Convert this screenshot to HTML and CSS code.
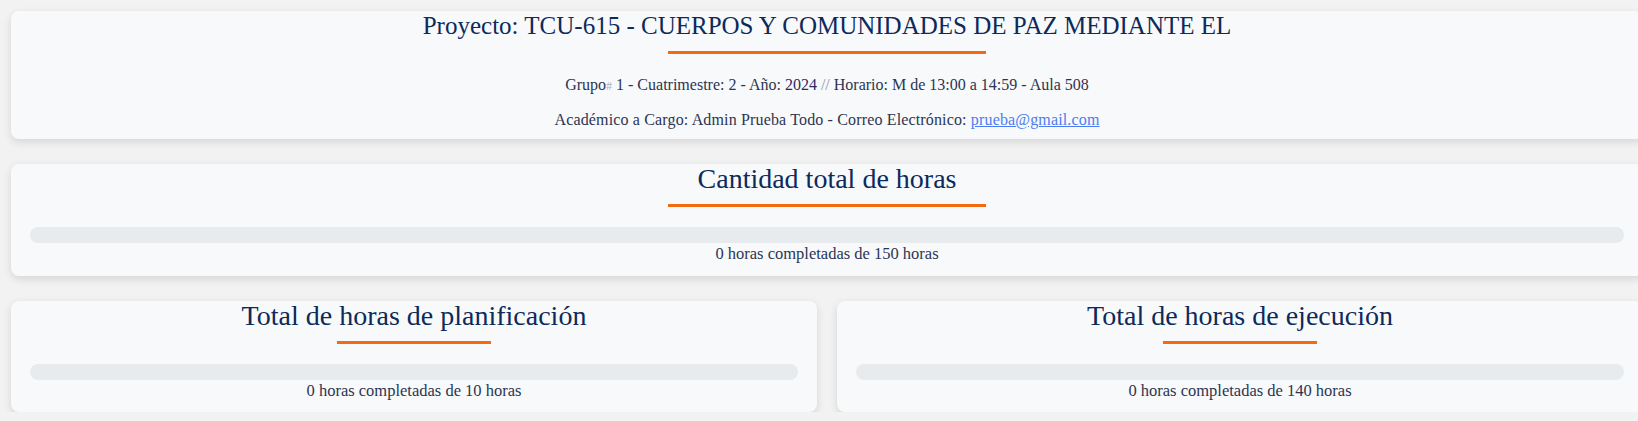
FILE: index.html
```html
<!DOCTYPE html>
<html lang="es">
<head>
<meta charset="utf-8">
<title>Proyecto TCU-615</title>
<link rel="stylesheet" href="styles.css">
</head>
<body>
<div class="page">
  <section class="card card-project">
    <h2 class="card-title card-title-caps">Proyecto: TCU-615 - CUERPOS Y COMUNIDADES DE PAZ MEDIANTE EL</h2>
    <div class="rule"></div>
    <div class="info-list">
      <p class="info">Grupo<span class="hash">#</span> 1 - Cuatrimestre: 2 - Año: <span class="year">2024</span> <span class="sep">//</span> Horario: M de 13:00 a 14:59 - Aula 508</p>
      <p class="info info-wide">Académico a Cargo: Admin Prueba Todo - Correo Electrónico: <a class="mail" href="#">prueba@gmail.com</a></p>
    </div>
  </section>

  <section class="card">
    <h2 class="card-title">Cantidad total de horas</h2>
    <div class="rule"></div>
    <div class="bar"><div class="bar-fill" style="width:0%"></div></div>
    <p class="progress-text">0 horas completadas de 150 horas</p>
  </section>

  <div class="row">
    <section class="card card-half">
      <h2 class="card-title">Total de horas de planificación</h2>
      <div class="rule"></div>
      <div class="bar"><div class="bar-fill" style="width:0%"></div></div>
      <p class="progress-text">0 horas completadas de 10 horas</p>
    </section>
    <section class="card card-half">
      <h2 class="card-title">Total de horas de ejecución</h2>
      <div class="rule"></div>
      <div class="bar"><div class="bar-fill" style="width:0%"></div></div>
      <p class="progress-text">0 horas completadas de 140 horas</p>
    </section>
  </div>
</div>
</body>
</html>
```

FILE: styles.css
```css
html, body {
  margin: 0;
  padding: 0;
  overflow: hidden;
  background: #f2f2f2;
}

body {
  font-family: "Liberation Serif", "DejaVu Serif", serif;
  color: #2b3553;
}

.page {
  width: 1632px;
  padding: 11px 0 0 11px;
  display: flex;
  flex-direction: column;
  gap: 25px;
}

.card {
  background: #f8f9fa;
  border-radius: 8px;
  box-shadow: 0 3px 8px rgba(0, 0, 0, 0.12);
  padding: 0 19px 12px;
  text-align: center;
}

.card-project {
  padding-bottom: 0;
}

.card-half {
  padding-bottom: 11px;
}

.card-title {
  margin: 0;
  font-weight: 400;
  font-size: 28px;
  line-height: 29px;
  color: #0c2a5a;
}

.card-title-caps {
  font-size: 25px;
}

.rule {
  width: 20%;
  height: 3px;
  margin: 11px auto 0;
  background: #f46a10;
}

.info-list {
  margin-top: 20px;
  padding-bottom: 9px;
  display: flex;
  flex-direction: column;
  gap: 12px;
}

.info {
  margin: 0;
  font-size: 16px;
  line-height: 21px;
  color: #2b3553;
}

.info-wide {
  letter-spacing: 0.15px;
}

.hash {
  color: #a9b0bf;
  font-size: 12px;
}

.year {
  color: #2a2a6a;
}

.sep {
  color: #8d95a8;
}

.mail {
  color: #4c7cf2;
  text-decoration: underline;
}

.bar {
  margin-top: 20px;
  height: 16px;
  border-radius: 8px;
  background: #e8ebee;
  overflow: hidden;
}

.bar-fill {
  height: 100%;
  background: #f46a10;
}

.progress-text {
  margin: 0;
  font-size: 16.5px;
  line-height: 21px;
  color: #2b3553;
}

.row {
  display: grid;
  grid-template-columns: 806px 806px;
  gap: 20px;
}
```
